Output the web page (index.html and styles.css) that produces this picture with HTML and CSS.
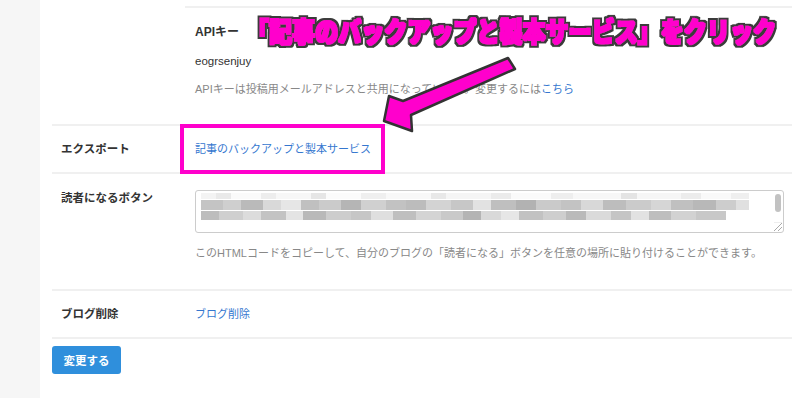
FILE: index.html
```html
<!DOCTYPE html>
<html lang="ja">
<head>
    <meta charset="UTF-8">
    <meta name="viewport" content="width=device-width, initial-scale=1.0">
    <title>詳細設定</title>
    <link rel="stylesheet" href="styles.css">
</head>
<body>
    <div class="page">
        <div class="sidebar"></div>
        <div class="main">
            <div class="row first">
                <div class="label"></div>
                <div class="value">
                    <div class="api-box">
                        <div class="api-title">APIキー</div>
                        <div class="api-key">eogrsenjuy</div>
                        <div class="help">APIキーは投稿用メールアドレスと共用になっています。変更するには<a href="#" class="link">こちら</a></div>
                    </div>
                </div>
            </div>

            <div class="row">
                <div class="label">エクスポート</div>
                <div class="value"><a href="#" class="link text">記事のバックアップと製本サービス</a></div>
            </div>

            <div class="row reader">
                <div class="label">読者になるボタン</div>
                <div class="value">
                    <div class="code-box">
                        <div class="blur-row r1"></div>
                        <div class="blur-row r2"></div>
                        <div class="blur-row r3"></div>
                        <div class="scroll-thumb"></div>
                        <div class="grip"></div>
                    </div>
                    <div class="help text">このHTMLコードをコピーして、自分のブログの「読者になる」ボタンを任意の場所に貼り付けることができます。</div>
                </div>
            </div>

            <div class="row">
                <div class="label">ブログ削除</div>
                <div class="value"><a href="#" class="link text">ブログ削除</a></div>
            </div>

            <button class="submit">変更する</button>
        </div>
    </div>

    <!-- annotation drawn over the screenshot -->
    <svg class="overlay" width="800" height="398" viewBox="0 0 800 398">
        <defs>
            <filter id="outline" x="-5%" y="-40%" width="110%" height="180%">
                <feMorphology in="SourceAlpha" operator="dilate" radius="3" result="thick"/>
                <feFlood flood-color="#3a3a3a"/>
                <feComposite in2="thick" operator="in" result="edge"/>
                <feMorphology in="SourceGraphic" operator="dilate" radius="0.9" result="bold"/>
                <feMerge>
                    <feMergeNode in="edge"/>
                    <feMergeNode in="bold"/>
                </feMerge>
            </filter>
        </defs>
        <rect x="182" y="126" width="201" height="46" fill="none" stroke="#f0c" stroke-width="4"/>
        <polygon points="384,121 412,131 411,115 515,69 508,58 403,101 389,96" fill="#f0c" stroke="#333" stroke-width="2.5" stroke-linejoin="round"/>
        <text x="0" y="0" transform="translate(246 42) scale(1 1.14)" class="note" filter="url(#outline)" textLength="530" lengthAdjust="spacingAndGlyphs">「記事のバックアップと製本サービス」をクリック</text>
    </svg>
</body>
</html>
```

FILE: styles.css
```css
body {
    margin: 0;
    font-family: "Liberation Sans", "Noto Sans CJK JP", sans-serif;
    font-size: 11px;
    color: #333;
    background: #fff;
    position: relative;
}

.page {
    display: flex;
    min-height: 398px;
}

.sidebar {
    width: 40px;
    background-color: #f6f6f6;
}

.main {
    width: 740px;
    padding: 0 8px 0 12px;
}

.row {
    display: flex;
    border-bottom: 2px solid #f0f0f0;
    line-height: 18px;
}

.label {
    width: 124px;
    padding: 14px 0 14px 9px;
    font-weight: bold;
    font-size: 11.5px;
    color: #333;
}

.value {
    flex: 1;
}

.text {
    display: block;
    padding: 14px 0 14px 10px;
}

.link {
    color: #3577cf;
    text-decoration: none;
}

.help {
    color: #888;
    font-size: 11px;
}

/* api key block */
.first .label {
    padding-top: 0;
    padding-bottom: 0;
}

.api-box {
    margin-top: 6px;
    border-top: 2px solid #f0f0f0;
    padding: 15px 0 26px 10px;
}

.api-title {
    font-weight: bold;
    font-size: 12px;
}

.api-key {
    margin-top: 11px;
    font-size: 11.5px;
}

.api-box .help {
    margin-top: 10px;
}

/* reader button row */
.reader .label {
    padding-top: 15px;
}

.reader .value {
    padding-top: 16px;
}

.code-box {
    position: relative;
    box-sizing: border-box;
    height: 43px;
    margin: 0 8px 0 10px;
    padding: 2px 0 0 5px;
    border: 1px solid #ccc;
    border-radius: 3px;
}

.blur-row {
    height: 6px;
}

.r1 {
    width: 548px;
    background: linear-gradient(to right, #f3f3f3 0 15px, #e9e9e9 15px 30px, #fafafa 30px 60px, #ededed 60px 75px, #f7f7f7 75px 110px, #e6e6e6 110px 125px, #fbfbfb 125px 160px, #efefef 160px 185px, #f8f8f8 185px 230px, #e8e8e8 230px 245px, #f5f5f5 245px 290px, #ebebeb 290px 310px, #fafafa 310px 350px, #eeeeee 350px 372px, #f7f7f7 372px 420px, #e4e4e4 420px 436px, #f6f6f6 436px 480px, #ececec 480px 500px, #f9f9f9 500px 530px, #efefef 530px 548px);
}

.r2 {
    margin-top: 1px;
    height: 10px;
    width: 548px;
    background: linear-gradient(to right, #c4c4c4 0 22px, #cfcfcf 22px 40px, #bababa 40px 62px, #d9d9d9 62px 80px, #e6e6e6 80px 100px, #c0c0c0 100px 118px, #cbcbcb 118px 140px, #b5b5b5 140px 160px, #d0d0d0 160px 185px, #c2c2c2 185px 205px, #bcbcbc 205px 225px, #d3d3d3 225px 250px, #c7c7c7 250px 272px, #e2e2e2 272px 290px, #bfbfbf 290px 315px, #b2b2b2 315px 335px, #cacaca 335px 360px, #c3c3c3 360px 380px, #d8d8d8 380px 402px, #bdbdbd 402px 425px, #cbcbcb 425px 450px, #d6d6d6 450px 470px, #c0c0c0 470px 492px, #b8b8b8 492px 515px, #cdcdcd 515px 535px, #e0e0e0 535px 548px);
}

.r3 {
    margin-top: 1px;
    height: 9px;
    width: 525px;
    background: linear-gradient(to right, #bdbdbd 0 18px, #cfcfcf 18px 42px, #dcdcdc 42px 60px, #c3c3c3 60px 85px, #e4e4e4 85px 102px, #b9b9b9 102px 125px, #cdcdcd 125px 150px, #c6c6c6 150px 170px, #dfdfdf 170px 192px, #bfbfbf 192px 215px, #d4d4d4 215px 240px, #c9c9c9 240px 262px, #b4b4b4 262px 280px, #d9d9d9 280px 300px, #e6e6e6 300px 318px, #c2c2c2 318px 342px, #cecece 342px 365px, #bababa 365px 385px, #dadada 385px 410px, #c5c5c5 410px 430px, #e2e2e2 430px 448px, #bebebe 448px 470px, #d2d2d2 470px 495px, #c8c8c8 495px 525px);
}

.scroll-thumb {
    position: absolute;
    top: 3px;
    right: 2px;
    width: 6px;
    height: 18px;
    border-radius: 3px;
    background-color: #c2c2c2;
}

.grip {
    position: absolute;
    right: 1px;
    bottom: 1px;
    width: 8px;
    height: 8px;
    border-top: 1px solid #eee;
    background: linear-gradient(135deg, transparent 48%, #aaa 48%, #aaa 56%, transparent 56%, transparent 72%, #aaa 72%, #aaa 80%, transparent 80%);
}

.reader .help {
    padding: 11px 0 27px 10px;
}

.submit {
    display: block;
    margin-top: 7px;
    width: 69px;
    height: 28px;
    padding: 0;
    border: none;
    border-radius: 3px;
    background-color: #2f8fdc;
    color: #fff;
    font-family: "Noto Sans CJK JP", sans-serif;
    font-weight: bold;
    font-size: 11.5px;
    cursor: pointer;
}

.overlay {
    position: absolute;
    top: 0;
    left: 0;
    pointer-events: none;
}

.note {
    font-family: "Noto Sans CJK JP", sans-serif;
    font-weight: 900;
    font-size: 24px;
    fill: #f0c;
}
```
